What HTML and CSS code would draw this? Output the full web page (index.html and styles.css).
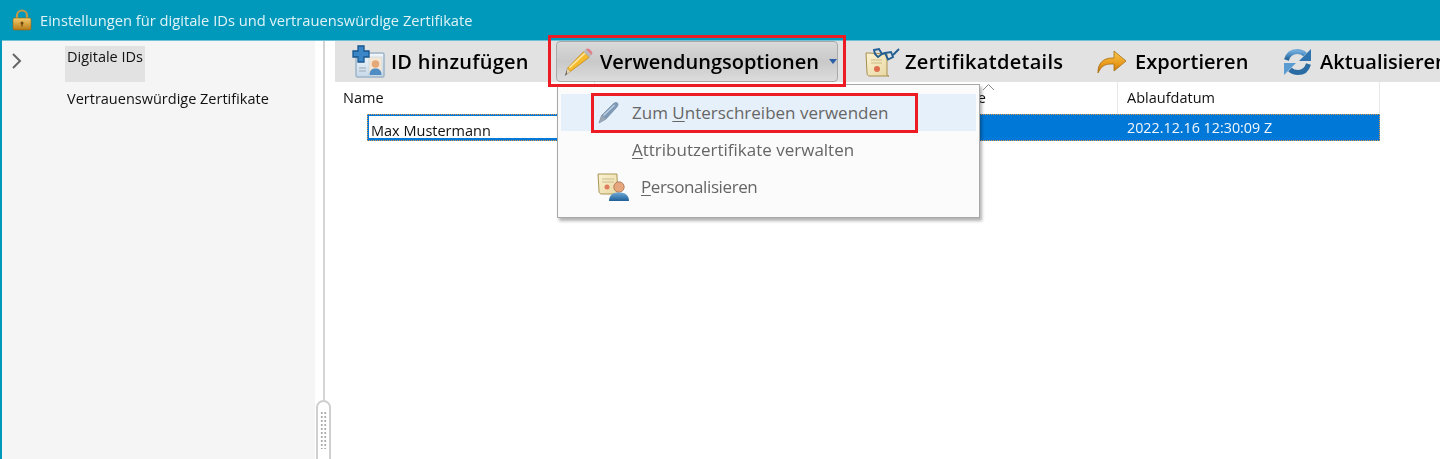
FILE: index.html
```html
<!DOCTYPE html>
<html lang="de">
<head>
<meta charset="utf-8">
<title>Einstellungen für digitale IDs</title>
<link rel="stylesheet" href="styles.css">
</head>
<body>
<div class="window">
  <svg class="defs" width="0" height="0">
    <defs>
      <linearGradient id="gold" x1="0" y1="0" x2="0" y2="1"><stop offset="0" stop-color="#f4cb6a"/><stop offset="1" stop-color="#b87a18"/></linearGradient>
      <linearGradient id="arrow" x1="0" y1="0" x2="0" y2="1"><stop offset="0" stop-color="#f8c84a"/><stop offset=".6" stop-color="#e9991b"/><stop offset="1" stop-color="#b96f10"/></linearGradient>
      <linearGradient id="paper" x1="0" y1="0" x2="1" y2="1"><stop offset="0" stop-color="#fbf3d2"/><stop offset="1" stop-color="#e8d7a2"/></linearGradient>
      <linearGradient id="card" x1="0" y1="0" x2="0" y2="1"><stop offset="0" stop-color="#f2f7fb"/><stop offset="1" stop-color="#c6d9e9"/></linearGradient>
      <linearGradient id="blue" x1="0" y1="0" x2="0" y2="1"><stop offset="0" stop-color="#6ea9d9"/><stop offset="1" stop-color="#1f5f96"/></linearGradient>
    </defs>
  </svg>
  <header class="titlebar">
    <svg class="lock" width="20" height="22" viewBox="0 0 20 22"><path d="M5 10V6.500a5 5 0 0 1 10 0V10" fill="none" stroke="#c2974a" stroke-width="2.200"/><rect x="1" y="9" width="18" height="12" rx="1.500" fill="url(#gold)" stroke="#96651a" stroke-width=".6"/><circle cx="10" cy="14" r="1.500" fill="#6d4a10"/><path d="M10 14v3.500" stroke="#6d4a10" stroke-width="1.200"/></svg>
    <span class="title">Einstellungen für digitale IDs und vertrauenswürdige Zertifikate</span>
  </header>
  <div class="body">
    <aside class="sidebar">
      <svg class="chevron" width="12" height="18" viewBox="0 0 12 18"><path d="M2 2l7 7-7 7" fill="none" stroke="#666" stroke-width="2"/></svg>
      <nav class="nav">
        <div class="nav-item selected">Digitale IDs</div>
        <div class="nav-item">Vertrauenswürdige Zertifikate</div>
      </nav>
    </aside>
    <div class="splitter">
      <div class="grip"><i></i></div>
    </div>
    <main class="content">
      <div class="toolbar">
        <div class="tool tool-add">
          <svg width="34" height="36" viewBox="0 0 34 36"><rect x="5" y="9" width="28" height="24" rx="1.500" fill="url(#card)" stroke="#9db4c8" stroke-width="1.500"/><rect x="18" y="13" width="13" height="18" fill="#f5e7d5" stroke="#c4d3df" stroke-width=".6"/><circle cx="24.500" cy="20" r="3.800" fill="#e5a878"/><path d="M18.500 31c0-5 2.500-6.500 6-6.500s6 1.500 6 6.500z" fill="#4f8cc4"/><path d="M8 24h7M8 27h7" stroke="#98a7b4" stroke-width="1.200"/><path d="M2 7h5V2h6v5h5v6h-5v5H7v-5H2z" fill="#3a86c6" stroke="#17568f" stroke-width="1.300"/></svg>
          <span>ID hinzufügen</span>
        </div>
        <div class="tool tool-options">
          <svg width="34" height="34" viewBox="0 0 34 34"><path d="M9 27l-6 5 2.500-8z" fill="#555"/><path d="M5.500 24L23 6l6 6L9 27z" fill="#f6bb2c" stroke="#bd8115" stroke-width=".8"/><path d="M8 23L25 7" stroke="#fde49a" stroke-width="1.800"/><path d="M5.500 24L9 27l-4 3z" fill="#e9d3a8"/><path d="M23 6l2.500-2.500 6 6L29 12z" fill="#b8b8b8"/><path d="M25.500 3.500c1.200-1.200 2.800-1.200 4 0l2 2c1.200 1.200 1.200 2.800 0 4z" fill="#e07f88"/></svg>
          <span>Verwendungsoptionen</span>
          <b class="caret"></b>
        </div>
        <div class="tool tool-details">
          <svg width="35" height="30" viewBox="0 0 35 30"><path d="M1 6h3l18 1v20c0 1.500.5 2 2 2H5c-2 0-3-1-3-3z" fill="url(#paper)" stroke="#a88f4f"/><path d="M6 13h11M6 16h11" stroke="#cdbb88"/><circle cx="12" cy="22" r="3" fill="#dd6f50"/><g fill="none" stroke="#235f92" stroke-width="1.900"><path d="M9 3l5-1 3 5-4 3-3-3z"/><path d="M20 6l6-1 2 5-5 2.500z"/><path d="M17 7l3-1M28 8l6-6"/></g></svg>
          <span>Zertifikatdetails</span>
        </div>
        <div class="tool tool-export">
          <svg width="30" height="25" viewBox="0 0 30 25"><path d="M1 24c-.5-9 5-15 14-15h2V2l12 10-12 10v-7h-3c-7 0-10 3-13 9z" fill="url(#arrow)" stroke="#a86e10" stroke-width=".8"/></svg>
          <span>Exportieren</span>
        </div>
        <div class="tool tool-refresh">
          <svg width="29" height="28" viewBox="0 0 29 28"><path d="M3.500 12C5 6.500 9 3.500 14 3.500c3.500 0 6 1 8 3" fill="none" stroke="url(#blue)" stroke-width="5"/><path d="M28 1v12H16z" fill="#2f74ae"/><path d="M25.500 16C24 21.500 20 24.500 15 24.500c-3.500 0-6-1-8-3" fill="none" stroke="#2a6ca3" stroke-width="5"/><path d="M1 27V15h12z" fill="#5a9bd1"/></svg>
          <span>Aktualisieren</span>
        </div>
      </div>
      <div class="table">
        <div class="thead">
          <div class="th col-name">Name</div>
          <div class="th col-issuer">Ausgabestelle<svg class="sort" width="13" height="8" viewBox="0 0 13 8"><path d="M1 7l5.500-5.500L12 7" fill="none" stroke="#888"/></svg></div>
          <div class="th col-date">Ablaufdatum</div>
        </div>
        <div class="row">
          <div class="td col-name"><span class="edit">Max Mustermann</span></div>
          <div class="td col-issuer"></div>
          <div class="td col-date">2022.12.16 12:30:09 Z</div>
        </div>
      </div>
    </main>
  </div>

  <div class="menu">
    <div class="menu-item active">
      <svg class="pen" width="24" height="24" viewBox="0 0 24 24"><path d="M2 23l2.500-7.500L16 4c1.500-1.500 3.500-2 4.500-1s.5 3-1 4.500L9 19z" fill="#7f9ab6" stroke="#64809c" stroke-width=".6"/><path d="M6.500 15.500L17.500 5" stroke="#bcd0e2" stroke-width="1.500"/><path d="M2 23l2.500-7.500 4.500 3.500z" fill="#9aa7b3"/></svg>
      <span class="m-zum">Zum <u>U</u>nterschreiben verwenden</span>
    </div>
    <div class="menu-item">
      <span class="m-attr"><u>A</u>ttributzertifikate verwalten</span>
    </div>
    <div class="menu-item">
      <svg class="person" width="34" height="30" viewBox="0 0 34 30"><path d="M1 2h19v3l1 17H5c-2 0-3-1-3-3z" fill="url(#paper)" stroke="#a89659"/><path d="M5 7h12M5 10h12" stroke="#cbbd92"/><circle cx="10" cy="15" r="2.500" fill="#dd7d5c"/><circle cx="22" cy="15" r="5.200" fill="#e6a67e" stroke="#a8714e" stroke-width=".8"/><path d="M12 29c0-6 4-8.500 10-8.500s10 2.500 10 8.500z" fill="url(#blue)"/></svg>
      <span class="m-pers"><u>P</u>ersonalisieren</span>
    </div>
  </div>
  <div class="callout callout-btn"></div>
  <div class="callout callout-item"></div>
</div>
</body>
</html>
```
FILE: styles.css
```css
* { box-sizing: border-box; }
html, body { margin: 0; padding: 0; }
body { width: 1440px; height: 459px; overflow: hidden; background: #fff; font-family: "Open Sans", "Noto Sans", "Liberation Sans", sans-serif; color: #1a1a1a; }
.window { position: relative; width: 1440px; height: 459px; display: flex; flex-direction: column; border-left: 2px solid #0099bb; overflow: hidden; filter: blur(.3px); }
.defs { position: absolute; }

.titlebar { height: 41px; flex: none; margin-left: -2px; background: #0099bb; border-bottom: 1px solid #6fc3d6; display: flex; align-items: center; padding-left: 12px; gap: 8px; }
.lock { flex: none; }
.title { font-size: 14.700px; color: #dff3f7; white-space: nowrap; }

.body { flex: 1; display: flex; min-height: 0; }
.sidebar { width: 313px; flex: none; background: #f5f5f5; display: flex; padding-left: 9px; }
.chevron { margin-top: 11px; flex: none; }
.nav { margin-left: 42px; margin-top: 5px; display: flex; flex-direction: column; }
.nav-item { font-size: 14.500px; padding: 0 2px; height: 36px; white-space: nowrap; line-height: 22px; color: #111; }
.nav-item.selected { width: 80px; background: #e2e2e2; margin-bottom: 6px; }

.splitter { width: 20px; flex: none; position: relative; display: flex; justify-content: center; }
.splitter::before { content: ""; position: absolute; left: 8px; top: 0; bottom: 0; width: 2px; background: #d4d4d4; }
.grip { position: absolute; left: 1px; top: 359px; width: 15px; height: 70px; border: 2px solid #cfcfcf; border-radius: 8px; background: #fff; display: flex; justify-content: center; padding-top: 9px; }
.grip i { width: 7px; height: 38px; background-image: radial-gradient(#aaa 1px, transparent 1.200px); background-size: 3.500px 4px; }

.content { flex: 1; min-width: 0; overflow: hidden; }
.toolbar { height: 41px; background: #e2e2e2; display: flex; align-items: center; padding-left: 16px; white-space: nowrap; font-size: 20px; font-weight: 600; color: #000; }
.tool { display: flex; align-items: center; flex: none; height: 41px; }
.tool-add { gap: 6px; width: 205px; letter-spacing: .25px; }
.tool-options { gap: 6px; width: 282px; padding-left: 5px; border: 1px solid #a9a9a9; border-radius: 4px; background: linear-gradient(#d9d9d9, #c9c9c9 50%, #dcdcdc); }
.caret { width: 0; height: 0; margin-left: 4px; border: 4px solid transparent; border-top: 5px solid #2c5fa8; border-bottom: 0; }
.tool-details { margin-left: 27px; gap: 5px; width: 232px; letter-spacing: .3px; }
.tool-export { gap: 8px; width: 186px; }
.tool-refresh { gap: 8px; }

.table { width: 1045px; font-size: 14.500px; color: #111; }
.thead { height: 32px; display: flex; }
.th { position: relative; line-height: 32px; padding-left: 8px; border-right: 1px solid #e8e8e8; white-space: nowrap; }
.col-name { width: 260px; }
.col-issuer { width: 523px; }
.col-date { width: 262px; padding-left: 9px; }
.th.col-issuer { text-align: right; padding-right: 131px; }
.sort { position: absolute; right: 122px; top: 1px; }
.row { height: 27px; margin-left: 32px; width: 1013px; display: flex; background: #0078d7; outline: 1px dotted #e09a4a; outline-offset: -1px; }
.td.col-name { width: 228px; flex: none; }
.td.col-issuer { width: 523px; flex: none; }
.td.col-date { flex: 1; color: #f0f7fc; line-height: 28px; white-space: nowrap; font-size: 14.300px; }
.edit { display: block; height: 22px; background: #fff; color: #111; padding-left: 2px; margin-left: 2px; line-height: 30px; margin-top: 2px; overflow: hidden; }

.menu { position: absolute; left: 555px; top: 84px; width: 423px; height: 134px; background: #fbfbfb; border: 1px solid #a8a8a8; box-shadow: 2px 3px 3px rgba(0,0,0,.3); padding: 9px 3px 0; font-size: 17px; color: #666; }
.menu-item { height: 37px; display: flex; align-items: center; white-space: nowrap; position: relative; }
.menu-item.active { background: #e6f0fa; }
.pen { position: absolute; left: 36px; top: 6px; }
.person { position: absolute; left: 36px; top: 4px; }
.m-zum, .m-attr { margin-left: 71px; }
.m-pers { margin-left: 80px; letter-spacing: -.4px; }
.menu-item u { text-underline-offset: 2px; }

.callout { position: absolute; border: 3px solid #ed1c24; pointer-events: none; }
.callout-btn { left: 546px; top: 35px; width: 298px; height: 52px; }
.callout-item { left: 589px; top: 93px; width: 327px; height: 40px; }
```
